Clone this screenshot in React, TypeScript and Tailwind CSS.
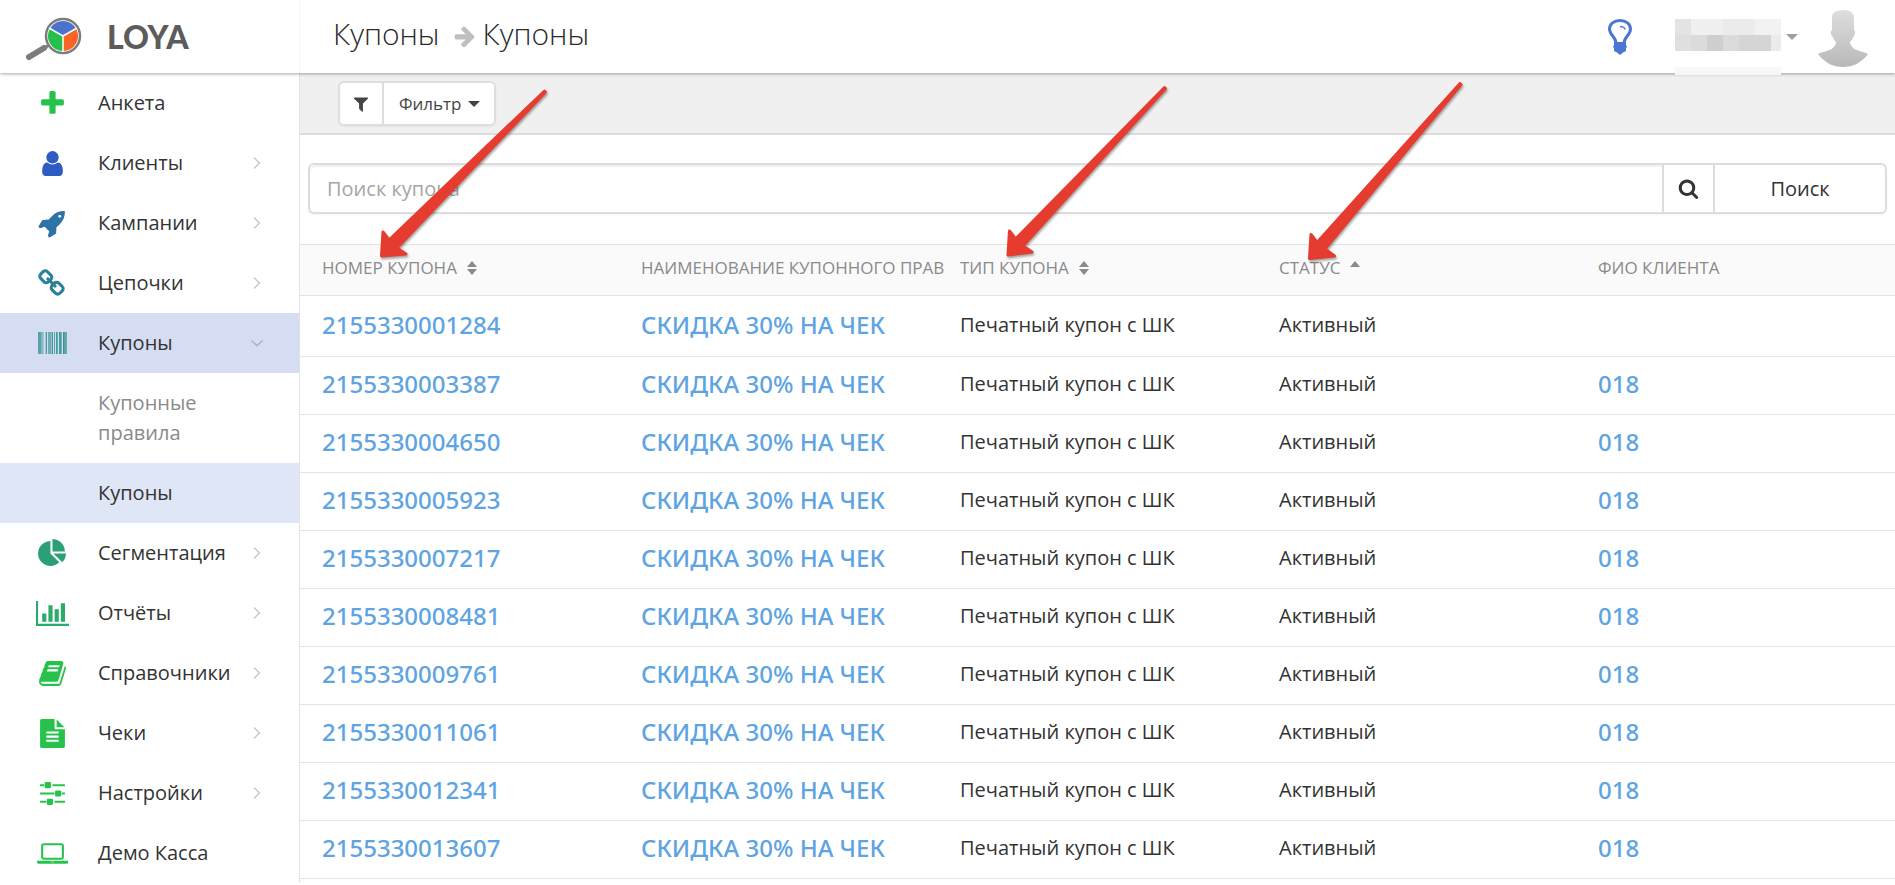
import type { ReactNode } from "react";
import { clsx } from "clsx";

const iconPaths = {
    plus: "M1600 736v192q0 40-28 68t-68 28h-416v416q0 40-28 68t-68 28h-192q-40 0-68-28t-28-68v-416h-416q-40 0-68-28t-28-68v-192q0-40 28-68t68-28h416v-416q0-40 28-68t68-28h192q40 0 68 28t28 68v416h416q40 0 68 28t28 68z",
    user: "M1536 1399q0 109-62.5 187t-150.5 78h-854q-88 0-150.5-78t-62.5-187q0-85 8.5-160.5t31.5-152 58.5-131 94-89 134.5-34.5q131 128 313 128t313-128q76 0 134.5 34.5t94 89 58.5 131 31.5 152 8.5 160.5zm-256-887q0 159-112.5 271.5t-271.5 112.5-271.5-112.5-112.5-271.5 112.5-271.5 271.5-112.5 271.5 112.5 112.5 271.5z",
    rocket: "M1440 448q0-40-28-68t-68-28-68 28-28 68 28 68 68 28 68-28 28-68zm224-288q0 249-75.5 430.5t-253.5 360.5q-81 80-195 176l-20 379q-2 16-16 26l-384 224q-7 4-16 4-12 0-23-9l-64-64q-13-14-8-32l85-276-281-281-276 85q-3 1-9 1-14 0-23-9l-64-64q-17-19-5-39l224-384q10-14 26-16l379-20q96-114 176-195 188-187 358-258t431-71q14 0 24 9.5t10 22.5z",
    link: "M1456 1216q0-40-28-68l-208-208q-28-28-68-28-42 0-72 32 3 3 19 18.5t21.5 21.5 15 19 13 25.5 3.5 27.5q0 40-28 68t-68 28q-15 0-27.5-3.5t-25.5-13-19-15-21.5-21.5-18.5-19q-33 31-33 73 0 40 28 68l206 207q27 27 68 27 40 0 68-26l147-146q28-28 28-67zm-703-705q0-40-28-68l-206-207q-28-28-68-28-39 0-68 27l-147 146q-28 28-28 67 0 40 28 68l208 208q27 27 68 27 42 0 72-31-3-3-19-18.5t-21.5-21.5-15-19-13-25.5-3.5-27.5q0-40 28-68t68-28q15 0 27.5 3.5t25.5 13 19 15 21.5 21.5 18.5 19q33-31 33-73zm895 705q0 120-85 203l-147 146q-83 83-203 83-121 0-204-85l-206-207q-83-83-83-203 0-123 88-209l-88-88q-86 88-208 88-120 0-204-84l-208-208q-84-84-84-204t85-203l147-146q83-83 203-83 121 0 204 85l206 207q83 83 83 203 0 123-88 209l88 88q86-88 208-88 120 0 204 84l208 208q84 84 84 204z",
    pie: "M768 890l546 546q-106 108-247.5 168t-298.5 60q-209 0-385.5-103t-279.5-279.5-103-385.5 103-385.5 279.5-279.5 385.5-103v762zm187 6h773q0 157-60 298.5t-168 247.5zm709-128h-768v-768q209 0 385.5 103t279.5 279.5 103 385.5z",
    chart: "M640 896v512h-256v-512h256zm384-512v1024h-256v-1024h256zm1024 1152v128h-2048v-1536h128v1408h1920zm-640-896v768h-256v-768h256zm384-384v1152h-256v-1152h256z",
    book: "M1703 478q40 57 18 129l-275 906q-19 64-76.5 107.5t-122.5 43.5h-923q-77 0-148.5-53.5t-99.5-131.5q-24-67-2-127 0-4 3-27t4-37q1-8-3-21.5t-3-19.5q2-11 8-21t16.5-23.5 16.5-23.5q23-38 45-91.5t30-91.5q3-10 .5-30t-.5-28q3-11 17-28t17-23q21-36 42-92t25-90q1-9-2.5-32t.5-28q4-13 22-30.5t22-22.5q19-26 42.5-84.5t27.5-96.5q1-8-3-25.5t-2-26.5q2-8 9-18t18-23 17-21q8-12 16.5-30.5t15-35 16-36 19.5-32 26.5-23.5 36-11.5 47.5 5.5l-1 3q38-9 51-9h761q74 0 114 56t18 130l-274 906q-36 119-71.5 153.5t-128.5 34.5h-869q-27 0-38 15-11 16-1 43 24 70 144 70h923q29 0 56-15.5t35-41.5l300-987q7-22 5-57 38 15 59 43zm-1064 2q-4 13 2 22.5t20 9.5h608q13 0 25.5-9.5t16.5-22.5l21-64q4-13-2-22.5t-20-9.5h-608q-13 0-25.5 9.5t-16.5 22.5zm-83 256q-4 13 2 22.5t20 9.5h608q13 0 25.5-9.5t16.5-22.5l21-64q4-13-2-22.5t-20-9.5h-608q-13 0-25.5 9.5t-16.5 22.5z",
    file: "M1596 476q14 14 28 36h-472v-472q22 14 36 28zm-476 164h544v1056q0 40-28 68t-68 28h-1344q-40 0-68-28t-28-68v-1600q0-40 28-68t68-28h800v544q0 40 28 68t68 28zm160 736v-64q0-14-9-23t-23-9h-704q-14 0-23 9t-9 23v64q0 14 9 23t23 9h704q14 0 23-9t9-23zm0-256v-64q0-14-9-23t-23-9h-704q-14 0-23 9t-9 23v64q0 14 9 23t23 9h704q14 0 23-9t9-23zm0-256v-64q0-14-9-23t-23-9h-704q-14 0-23 9t-9 23v64q0 14 9 23t23 9h704q14 0 23-9t9-23z",
    sliders:
        "M128 320h256v128h-256zM896 320h768v128h-768zM480 192h256q64 0 64 64v256q0 64-64 64h-256q-64 0-64-64v-256q0-64 64-64zM128 832h896v128h-896zM1472 832h192v128h-192zM1120 704h256q64 0 64 64v256q0 64-64 64h-256q-64 0-64-64v-256q0-64 64-64zM128 1344h384v128h-384zM1024 1344h640v128h-640zM608 1216h256q64 0 64 64v256q0 64-64 64h-256q-64 0-64-64v-256q0-64 64-64z",
    laptop: "M416 1280q-66 0-113-47t-47-113v-704q0-66 47-113t113-47h1088q66 0 113 47t47 113v704q0 66-47 113t-113 47h-1088zm-32-864v704q0 13 9.5 22.5t22.5 9.5h1088q13 0 22.5-9.5t9.5-22.5v-704q0-13-9.5-22.5t-22.5-9.5h-1088q-13 0-22.5 9.5t-9.5 22.5zm1376 928h160v96q0 40-47 68t-113 28h-1600q-66 0-113-28t-47-68v-96h1760zm-720 96q16 0 16-16t-16-16h-160q-16 0-16 16t16 16h160z",
    search: "M1216 832q0-185-131.5-316.5t-316.5-131.5-316.5 131.5-131.5 316.5 131.5 316.5 316.5 131.5 316.5-131.5 131.5-316.5zm512 832q0 52-38 90t-90 38q-54 0-90-38l-343-342q-179 124-399 124-143 0-273.5-55.5t-225-150-150-225-55.5-273.5 55.5-273.5 150-225 225-150 273.5-55.5 273.5 55.5 225 150 150 225 55.5 273.5q0 220-124 399l343 343q37 37 37 90z",
    filter: "M1595 295q17 41-14 70l-493 493v742q0 42-39 59-13 5-25 5-27 0-45-19l-256-256q-19-19-19-45v-486l-493-493q-31-29-14-70 17-39 59-39h1280q42 0 59 39z",
    arrow: "M1600 960q0 54-37 91l-651 651q-39 37-91 37-51 0-90-37l-75-75q-38-38-38-91t38-91l293-293h-704q-52 0-84.5-37.5t-32.5-90.5v-128q0-53 32.5-90.5t84.5-37.5h704l-293-294q-38-36-38-90t38-90l75-75q38-38 90-38 53 0 91 38l651 651q37 35 37 90z",
};

const iconWidths: Record<string, number> = { chart: 2048, laptop: 1920 };

const Icon = ({ name, className }: { name: keyof typeof iconPaths; className?: string }) => (
    <svg viewBox={`0 0 ${iconWidths[name] ?? 1792} 1792`} fill="currentColor" aria-hidden="true" className={clsx("w-auto shrink-0", className)}>
        <path d={iconPaths[name]} />
    </svg>
);

// x offset, bar width and opacity
const bars = [
    [0, 3, 0.8], [3, 2, 0.5], [5, 1, 0.3], [7, 1, 0.3], [8, 1, 0.9], [10, 3, 0.65], [13, 1, 0.4], [14, 1, 0.95],
    [16, 1, 0.8], [18, 1, 0.9], [19, 1, 0.7], [21, 2, 0.9], [23, 1, 0.6], [25, 1, 1], [26, 1, 0.8], [27, 2, 0.7],
];

const BarcodeIcon = () => (
    <svg viewBox="0 0 29 22" fill="currentColor" aria-hidden="true" className="h-[22px] w-[29px]">
        {bars.map(([x, width, opacity]) => (
            <rect key={x} x={x} width={width} height="22" opacity={opacity} />
        ))}
    </svg>
);

const Logo = () => (
    <svg viewBox="0 0 58 44" aria-hidden="true" className="mt-1 h-[44px] w-[58px]">
        <path d="M5 40 20 31" stroke="#7c7c7c" strokeWidth="6" strokeLinecap="round" />
        <path d="m19 32 6-4" stroke="#7c7c7c" strokeWidth="3" />
        <circle cx="39" cy="19" r="17" fill="#fff" stroke="#7c7c7c" strokeWidth="2.5" />
        <path d="M39 19 26 11.500A15 15 0 0 1 52 11.500Z" fill="#4a72cc" />
        <path d="M39 19V34A15 15 0 0 1 26 11.500Z" fill="#24c04a" />
        <path d="M39 19V34A15 15 0 0 0 52 11.500Z" fill="#fb6424" />
        <path d="M39 35V19L25 11M39 19 53 11" fill="none" stroke="#fff" strokeWidth="1.500" />
    </svg>
);

const Chevron = ({ open }: { open?: boolean }) => (
    <svg viewBox="0 0 12 12" fill="none" stroke="currentColor" strokeWidth="1.3" aria-hidden="true" className={clsx("size-3", open ? "text-[#a9b0c4]" : "text-[#c4c4c4]")}>
        <path d={open ? "m.5 3.500 5.500 5.300 5.500-5.300" : "m3 .5 5.500 5.500L3 11.500"} />
    </svg>
);

const Caret = ({ className }: { className?: string }) => (
    <svg viewBox="0 0 12 6" fill="currentColor" aria-hidden="true" className={clsx("h-[6px] w-[12px]", className)}>
        <path d="M0 0h12L6 6z" />
    </svg>
);

const SortIcon = ({ active }: { active?: boolean }) => (
    <svg viewBox="0 0 10 14" fill="currentColor" aria-hidden="true" className="h-[14px] w-[10px]">
        <path d="M5 0l5 6H0z" />
        {!active && <path d="M0 8h10l-5 6z" />}
    </svg>
);

const menu: { label: string; color: string; icon: ReactNode; expandable?: boolean; open?: boolean }[] = [
    { label: "Анкета", color: "text-[#27c24c]", icon: <Icon name="plus" className="h-[29px]" /> },
    { label: "Клиенты", color: "text-[#2e5cc4]", icon: <Icon name="user" className="h-[29px]" />, expandable: true },
    { label: "Кампании", color: "text-[#2d73a6]", icon: <Icon name="rocket" className="h-[29px]" />, expandable: true },
    { label: "Цепочки", color: "text-[#2b8199]", icon: <Icon name="link" className="h-[29px]" />, expandable: true },
    { label: "Купоны", color: "text-[#389393]", icon: <BarcodeIcon />, expandable: true, open: true },
    { label: "Сегментация", color: "text-[#2b9f76]", icon: <Icon name="pie" className="h-[29px]" />, expandable: true },
    { label: "Отчёты", color: "text-[#2aab68]", icon: <Icon name="chart" className="h-[29px]" />, expandable: true },
    { label: "Справочники", color: "text-[#27c24c]", icon: <Icon name="book" className="h-[29px]" />, expandable: true },
    { label: "Чеки", color: "text-[#27c24c]", icon: <Icon name="file" className="h-[29px]" />, expandable: true },
    { label: "Настройки", color: "text-[#27c24c]", icon: <Icon name="sliders" className="h-[29px]" />, expandable: true },
    { label: "Демо Касса", color: "text-[#27c24c]", icon: <Icon name="laptop" className="h-[29px]" /> },
];

const Sidebar = () => (
    <nav className="w-[300px] shrink-0 border-r border-[#e2e2e2] text-[20px] leading-[30px] text-[#333]">
        <ul>
            {menu.map((item) => (
                <li key={item.label}>
                    <a href="#" className={clsx("flex h-[60px] items-center pr-9", item.open && "bg-[#d5ddf2]")}>
                        <span className={clsx("flex w-[98px] justify-center pl-[7px]", item.color)}>{item.icon}</span>
                        <span className="flex-1">{item.label}</span>
                        {item.expandable && <Chevron open={item.open} />}
                    </a>
                    {item.open && (
                        <ul>
                            <li>
                                <a href="#" className="block py-[15px] pr-20 pl-[98px] text-[#8a8a8a]">
                                    Купонные правила
                                </a>
                            </li>
                            <li>
                                <a href="#" aria-current="page" className="block bg-[#dfe6f5] py-[15px] pl-[98px]">
                                    Купоны
                                </a>
                            </li>
                        </ul>
                    )}
                </li>
            ))}
        </ul>
    </nav>
);

const Header = () => (
    <header className="relative z-10 flex h-[73px] bg-white shadow-[0_1px_3px_rgba(0,0,0,0.35)]">
        <a href="#" className="flex w-[300px] shrink-0 items-center gap-[25px] border-r border-[#f7f7f7] pl-6">
            <Logo />
            <span className="font-['Lato',sans-serif] text-[32px] font-black text-[#5c5c5c]">LOYA</span>
        </a>
        <div className="flex flex-1 items-center justify-between pr-[27px] pl-[33px]">
            <h1 className="flex items-center gap-[13px] pb-[6px] text-[30px] font-light text-[#2a2a2a]">
                Купоны
                <span className="flex items-center gap-[6px]">
                    <Icon name="arrow" className="mt-1 h-[24px] text-[#bfbfbf]" />
                    Купоны
                </span>
            </h1>
            <div className="flex items-center">
                <button type="button" aria-label="Подсказки">
                    <svg viewBox="0 0 24 36" fill="none" className="h-9 w-6">
                        <path
                            d="M8 24C8 18 1.500 16 1.500 10 1.500 5 6 1.500 12 1.500S22.500 5 22.500 10c0 6-6.500 8-6.500 14"
                            stroke="#4c76d6"
                            strokeWidth="3"
                        />
                        <path d="M6 23h12v3l1 1.500-1 1.500v3l-3 1.500L12 36l-3-2.500L6 32v-3l-1-1.500L6 26z" fill="#4c76d6" />
                        <path d="M12 7.500c3 0 4.500 1 5 3" stroke="#4c76d6" strokeWidth="1.500" />
                    </svg>
                </button>
                <button type="button" aria-label="Профиль" className="ml-[43px] flex items-center">
                    <svg viewBox="0 0 106 56" aria-hidden="true" className="mt-[21px] h-14 w-[106px]">
                        <path d="M0 0h16v16H0z" fill="#e3e3e3" />
                        <path d="M16 0h32v16H16z" fill="#f0f0f0" />
                        <path d="M48 0h32v16H48z" fill="#ebebeb" />
                        <path d="M80 0h26v16H80z" fill="#f2f2f2" />
                        <path d="M0 16h16v16H0z" fill="#dfdfdf" />
                        <path d="M16 16h16v16H16z" fill="#dbdbdb" />
                        <path d="M32 16h16v16H32z" fill="#cfcfcf" />
                        <path d="M48 16h16v16H48z" fill="#dbdbdb" />
                        <path d="M64 16h32v16H64z" fill="#d5d5d5" />
                        <path d="M96 16h10v16H96z" fill="#ebebeb" />
                        <path d="M0 48h106v8H0z" fill="#f7f7f7" />
                    </svg>
                    <Caret className="mx-[5px] text-[#a0a0a0]" />
                    <svg viewBox="0 0 50 57" aria-hidden="true" className="mt-[3px] ml-[15px] h-[57px] w-[50px]">
                        <defs>
                            <linearGradient id="avatar" x1="0" y1="0" x2="0" y2="1">
                                <stop offset="0" stopColor="#dedede" />
                                <stop offset="1" stopColor="#b8b8b8" />
                            </linearGradient>
                        </defs>
                        <path
                            d="M25 0c7 0 11 3 11 7v13c2 1 1 6-1 7-1 4-3 4-3 6 1 3 3 6 7 7 4 2 8 2 11 4-7 9-15 13-25 13S7 53 0 44c3-2 7-2 11-4 4-1 6-4 7-7 0-2-2-2-3-6-2-1-3-6-1-7V7c0-4 4-7 11-7z"
                            fill="url(#avatar)"
                        />
                    </svg>
                </button>
            </div>
        </div>
    </header>
);

const columns: { title: string; sort?: "both" | "asc" }[] = [
    { title: "Номер купона", sort: "both" },
    { title: "Наименование купонного прав" },
    { title: "Тип купона", sort: "both" },
    { title: "Статус", sort: "asc" },
    { title: "ФИО клиента" },
];

const coupons = [
    { number: "2155330001284", client: "" },
    { number: "2155330003387", client: "018" },
    { number: "2155330004650", client: "018" },
    { number: "2155330005923", client: "018" },
    { number: "2155330007217", client: "018" },
    { number: "2155330008481", client: "018" },
    { number: "2155330009761", client: "018" },
    { number: "2155330011061", client: "018" },
    { number: "2155330012341", client: "018" },
    { number: "2155330013607", client: "018" },
];

const CouponTable = () => (
    <table className="w-full table-fixed border-collapse text-left">
        <thead>
            <tr className="h-[51px] border-y border-[#e3e3e3] bg-[#fafafa]">
                {columns.map((column) => (
                    <th key={column.title} className="pb-1 pl-[22px] text-[17px] font-normal whitespace-nowrap text-[#8a8a8a] uppercase">
                        {column.sort ? (
                            <button type="button" className="flex items-center gap-[10px] uppercase">
                                {column.title}
                                <SortIcon active={column.sort === "asc"} />
                            </button>
                        ) : (
                            column.title
                        )}
                    </th>
                ))}
            </tr>
        </thead>
        <tbody className="text-[20px] text-[#333] [&_a]:font-['Noto_Sans',sans-serif] [&_a]:text-[24px] [&_a]:leading-9 [&_a]:font-medium [&_a]:text-[#5ea4e2]">
            {coupons.map((coupon) => (
                <tr key={coupon.number} className="h-[58px] border-b border-[#e3e3e3] first:h-[61px] [&>td]:pt-0 [&>td]:pb-[3px] [&>td]:pl-[22px]">
                    <td>
                        <a href="#">{coupon.number}</a>
                    </td>
                    <td>
                        <a href="#">СКИДКА 30% НА ЧЕК</a>
                    </td>
                    <td>Печатный купон с ШК</td>
                    <td>Активный</td>
                    <td>{coupon.client && <a href="#">{coupon.client}</a>}</td>
                </tr>
            ))}
        </tbody>
    </table>
);

// red pointers laid over the sortable columns
const Pointers = () => (
    <svg
        aria-hidden="true"
        className="pointer-events-none absolute top-0 left-0 z-20 h-[300px] w-[1500px] drop-shadow-[1px_2px_1px_rgba(0,0,0,0.35)]"
        viewBox="0 0 1500 300"
        fill="#e63c30"
        stroke="#e63c30"
        strokeWidth="3"
        strokeLinejoin="round"
    >
        <path d="M381.500 256 383 232l6 8L544.500 91l1 1L397 248l9 6z" />
        <path d="M1008 255 1009.500 231l6 8L1164.500 87.500l1 1L1023 246l9 6z" />
        <path d="M1309.500 258.500 1311 234.500l6 8L1460 83.500l1 1L1325 249l9.500 7z" />
    </svg>
);

export default function App() {
    return (
        <div className="relative h-screen overflow-hidden bg-white font-['Open_Sans',sans-serif]">
            <Header />
            <div className="flex">
                <Sidebar />
                <main className="min-w-0 flex-1">
                    <div className="flex h-[62px] items-start border-b-2 border-[#dcdcdc] bg-[#f0f0f0] pt-2 pl-[38px]">
                        <div className="flex h-[45px] rounded-md border-2 border-[#dedede] bg-white text-[#444] shadow-xs">
                            <button type="button" aria-label="Фильтровать" className="flex w-[44px] items-center justify-center border-r-2 border-[#dedede]">
                                <Icon name="filter" className="h-[18px]" />
                            </button>
                            <button type="button" className="flex items-center gap-[6px] pr-[14px] pl-[15px] text-[17px]">
                                Фильтр
                                <Caret />
                            </button>
                        </div>
                    </div>
                    <form className="mx-2 mt-7 mb-[30px] flex h-[51px] rounded-md border-2 border-[#dcdcdc] text-[20px] text-[#333] shadow-xs">
                        <input
                            type="text"
                            aria-label="Поиск купона"
                            placeholder="Поиск купона"
                            className="min-w-0 flex-1 rounded-l-md px-[17px] shadow-[inset_0_2px_1px_rgba(0,0,0,0.06)] outline-none placeholder:text-[#a6a6a6]"
                        />
                        <button type="button" aria-label="Найти" className="flex w-[53px] items-center justify-center border-x-2 border-[#dcdcdc]">
                            <Icon name="search" className="h-[21px]" />
                        </button>
                        <button type="submit" className="w-[170px]">
                            Поиск
                        </button>
                    </form>
                    <CouponTable />
                </main>
            </div>
            <Pointers />
        </div>
    );
}
